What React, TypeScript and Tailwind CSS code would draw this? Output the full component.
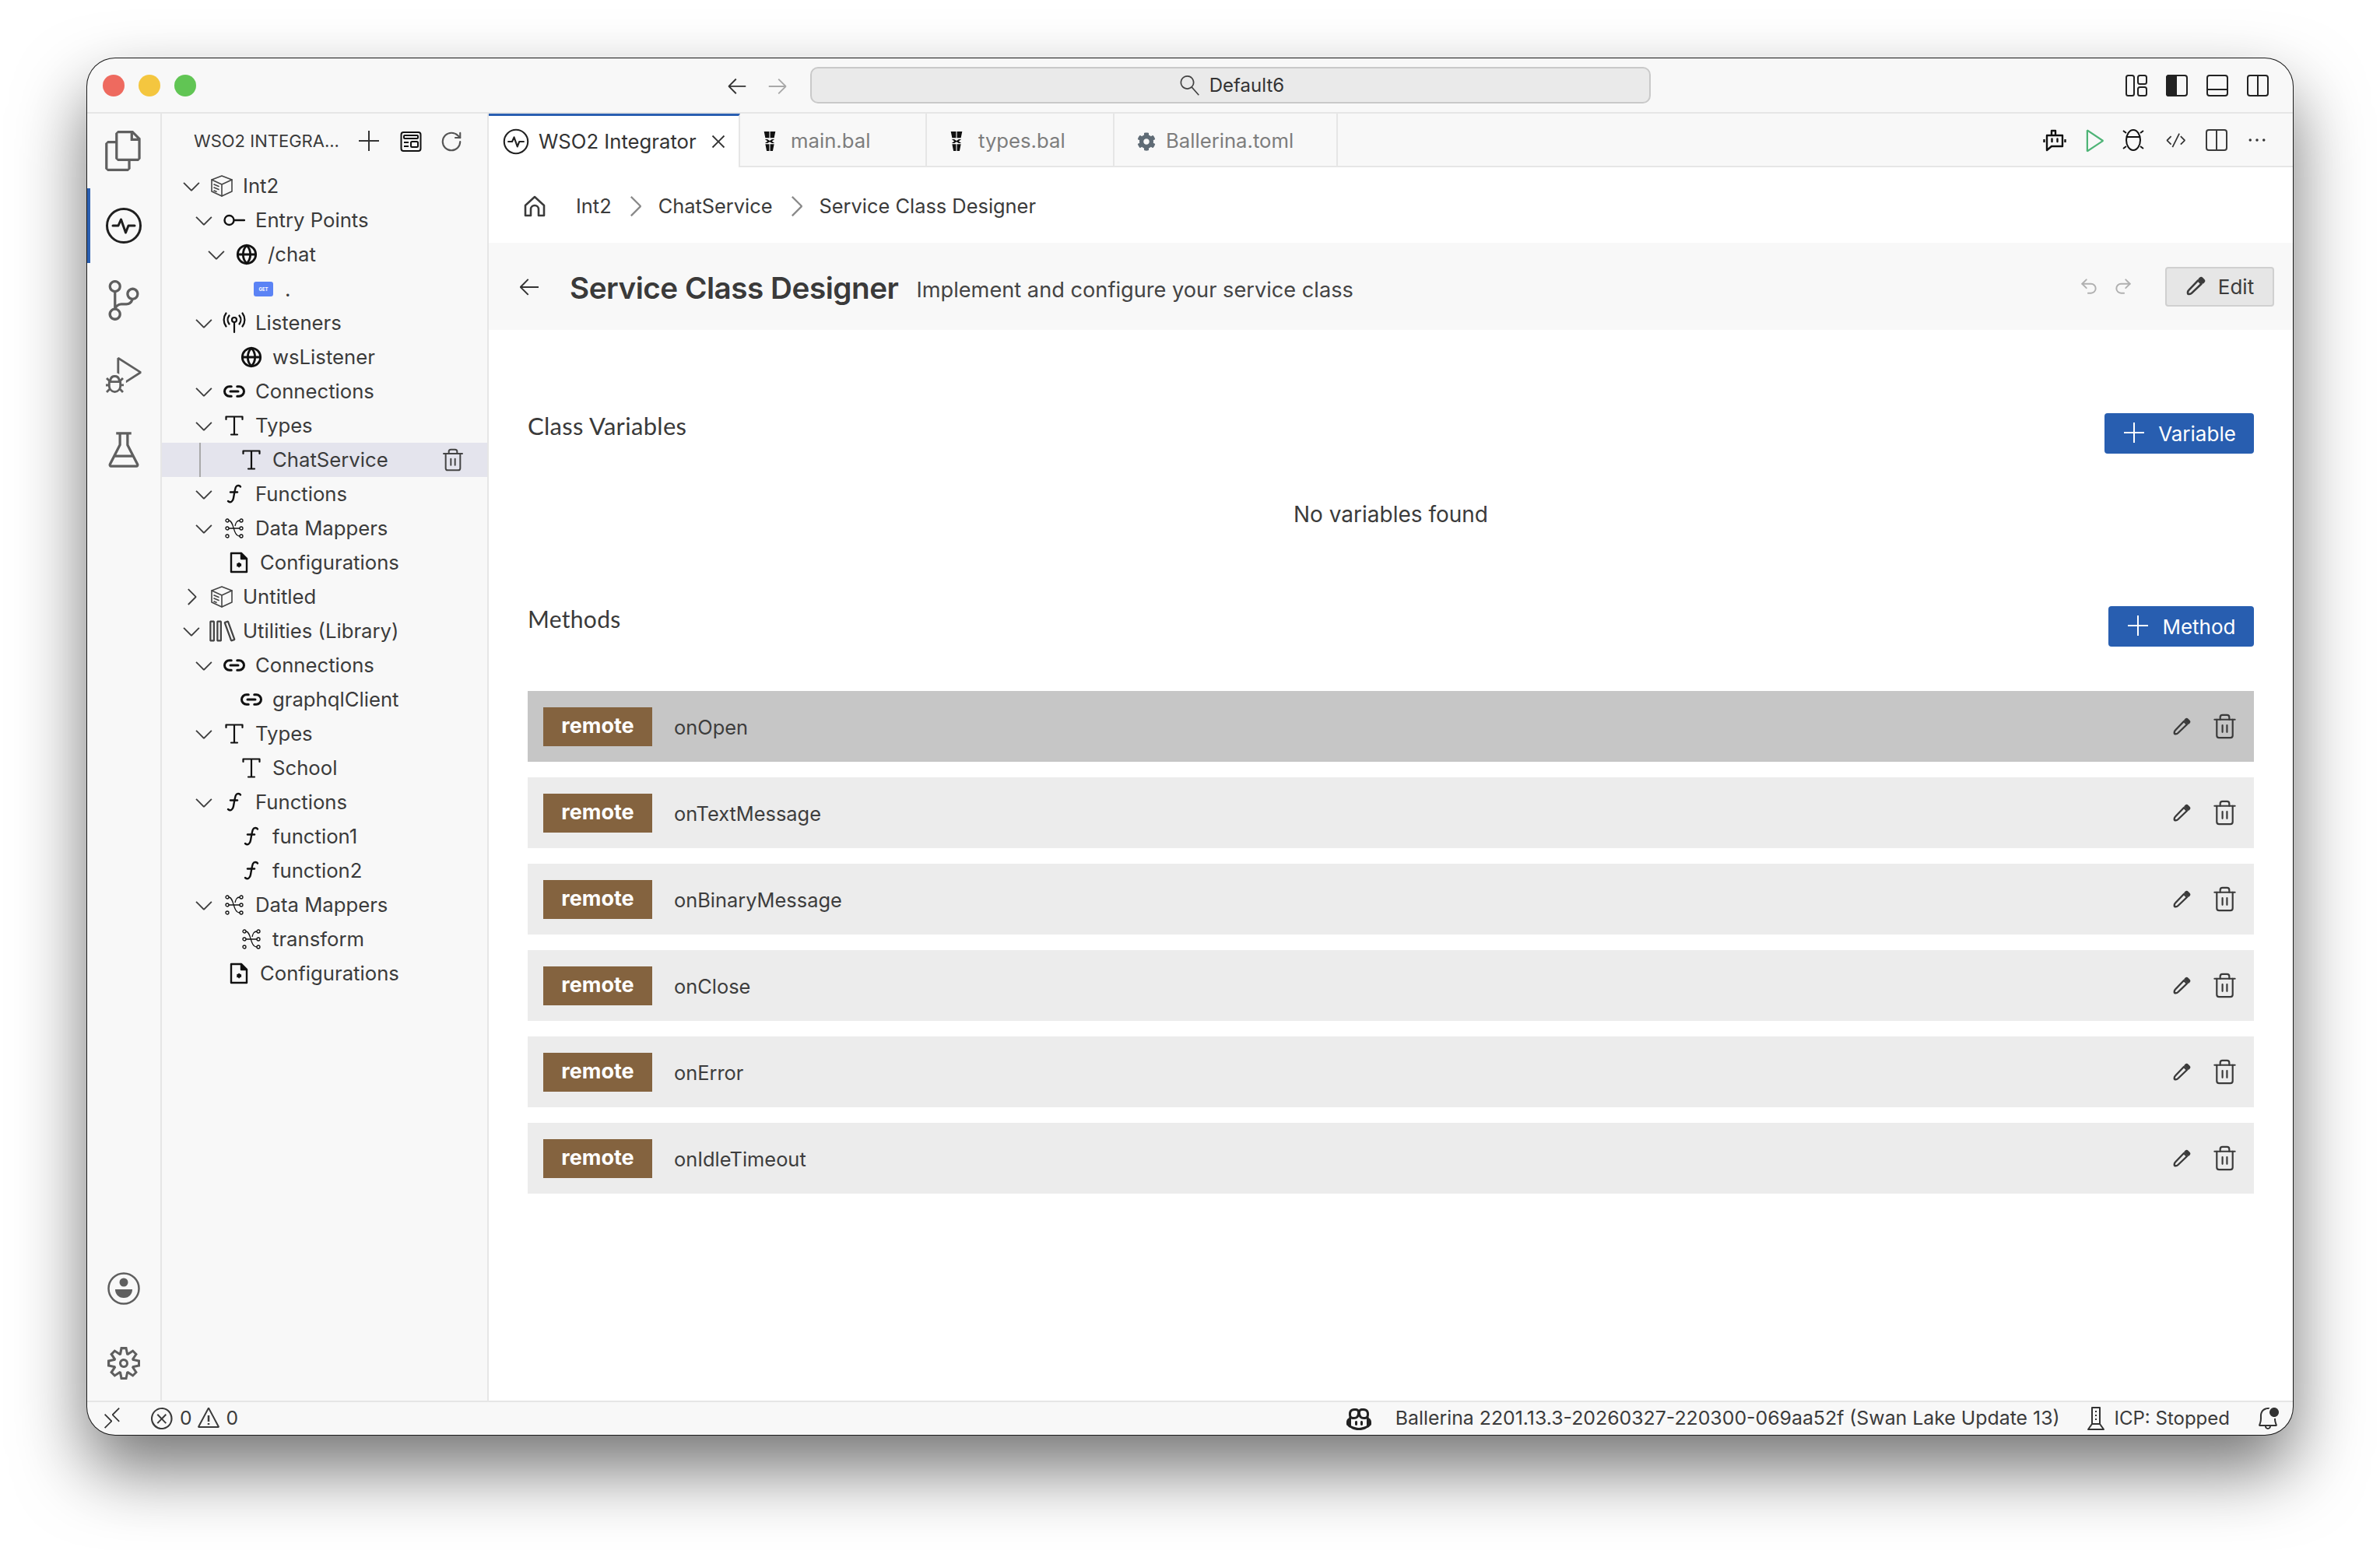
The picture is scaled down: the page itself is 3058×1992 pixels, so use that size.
import React from 'react';
import { Globe, Link2, Redo2, RotateCw, Trash2, Undo2 } from 'lucide-react';
import { FaCog } from 'react-icons/fa';
import {
  VscAdd, VscArrowLeft, VscArrowRight, VscBeaker, VscBellDot, VscChevronDown, VscChevronRight,
  VscClose, VscCode, VscCopilot, VscDebugAlt, VscEllipsis, VscError, VscFiles,
  VscLibrary, VscPlay, VscRemote, VscSearch, VscSettingsGear, VscSourceControl,
  VscWarning,
} from 'react-icons/vsc';

const Pulse = ({ size = 48 }: { size?: number }) => (
  <svg width={size} height={size} viewBox="0 0 48 48" fill="none" stroke="currentColor" strokeWidth="3" strokeLinecap="round" strokeLinejoin="round">
    <circle cx="24" cy="24" r="21.5" />
    <path d="M10 24h7l3.5-8 6 17 3.5-9h8" />
  </svg>
);

const PackageIcon = () => (
  <svg width="30" height="30" viewBox="0 0 30 30" fill="none" stroke="#444" strokeWidth="1.6" strokeLinejoin="round" strokeLinecap="round">
    <path d="M15 2l13 5v15l-13 6-13-6V7z" />
    <path d="M2 7l13 6 13-6M15 13v15" />
    <path d="M5 13l6 2.500M5 17l6 2.500M5 21l3 1.300" />
  </svg>
);

const EntryIcon = () => (
  <svg width="28" height="18" viewBox="0 0 28 18" fill="none" stroke="#111" strokeWidth="2.4" strokeLinecap="round">
    <circle cx="7.5" cy="9" r="6" />
    <path d="M14 9h13" />
  </svg>
);

const ListenIcon = () => (
  <svg width="30" height="28" viewBox="0 0 30 28" fill="none" stroke="#111" strokeWidth="2.2" strokeLinecap="round">
    <circle cx="15" cy="10" r="3" />
    <path d="M15 13v13" />
    <path d="M8.500 4.500a9 9 0 0 0 0 11M21.500 4.500a9 9 0 0 1 0 11M4.500 1.500a14 14 0 0 0 0 17M25.500 1.500a14 14 0 0 1 0 17" />
  </svg>
);

const TypeIcon = () => (
  <svg width="24" height="26" viewBox="0 0 24 26" fill="none" stroke="#111" strokeWidth="2.2" strokeLinecap="round" strokeLinejoin="round">
    <path d="M1.500 5V1.500h21V5M12 1.500v23M8 24.500h8" />
  </svg>
);

const FnIcon = () => (
  <svg width="20" height="26" viewBox="0 0 20 26" fill="none" stroke="#111" strokeWidth="2.4" strokeLinecap="round">
    <path d="M18 3.500c-1-1.500-4.500-2.500-6 .5-1 2-2 8-3 14-.6 4-3.500 7-7 4" />
    <path d="M5 10.500h9" />
  </svg>
);

const MapperIcon = () => (
  <svg width="24" height="26" viewBox="0 0 24 26" fill="none" stroke="#111" strokeWidth="1.3">
    <circle cx="3" cy="3" r="2" />
    <circle cx="21" cy="3" r="2" />
    <circle cx="3" cy="13" r="2" />
    <circle cx="21" cy="13" r="2" />
    <circle cx="3" cy="23" r="2" />
    <circle cx="21" cy="23" r="2" />
    <path d="M5 3c7 0 5 20 14 20M5 13h14M19 3c-4 0-5 3-6 7" />
  </svg>
);

const ConfigIcon = () => (
  <svg width="24" height="28" viewBox="0 0 24 28" fill="none" stroke="#111" strokeWidth="2.4" strokeLinejoin="round">
    <path d="M2 2h13l7 7v17H2z" />
    <path d="M15 2v7h7z" fill="#111" />
    <circle cx="12" cy="17" r="2.400" fill="#111" stroke="#111" strokeWidth="1.600" strokeDasharray="1.600 0.800" />
  </svg>
);

const LayoutIcon = ({ className = '' }: { className?: string }) => (
  <svg width="28" height="28" viewBox="0 0 28 28" fill="none" stroke="#111" strokeWidth="2" className={className}>
    <rect x="1.500" y="2" width="25" height="24" rx="3" />
    <rect x="5" y="6" width="18" height="4" rx="1" />
    <path d="M5 15h6M5 20h6" />
    <rect x="14" y="14" width="9" height="7" rx="1.500" />
  </svg>
);

const Ballerina = () => (
  <svg width="18" height="25" viewBox="0 0 16 24" preserveAspectRatio="none" fill="#111">
    <path d="M1.500 0h6v8H3zM8.500 0h6L13 8H8.500zM2.500 9.500h3l2.500 2 2.500-2h3l-3 2.500 3 2.500h-3L8 12.800 5.500 14.500h-3l3-2.500zM3 15.500h4.500V24H4.500zM8.500 15.500H13L11.500 24h-3z" />
  </svg>
);

const PanelsIcon = () => (
  <svg width="28" height="28" viewBox="0 0 28 28" fill="none" stroke="#222" strokeWidth="2">
    <rect x="1" y="1" width="10" height="26" rx="2.500" />
    <rect x="16" y="1" width="11" height="11" rx="2.500" />
    <rect x="16" y="16" width="11" height="11" rx="2.500" />
  </svg>
);

const SidebarFilled = () => (
  <svg width="28" height="28" viewBox="0 0 28 28" fill="none" stroke="#222" strokeWidth="2">
    <path d="M3.500 1H13v26H3.500A2.500 2.500 0 0 1 1 24.500v-21A2.500 2.500 0 0 1 3.500 1z" fill="#222" />
    <rect x="1" y="1" width="26" height="26" rx="3" />
  </svg>
);

const BottomPanel = () => (
  <svg width="28" height="28" viewBox="0 0 28 28" fill="none" stroke="#222" strokeWidth="2">
    <rect x="1" y="1" width="26" height="26" rx="3" />
    <path d="M1 19h26" />
  </svg>
);

const SplitIcon = ({ color = '#222' }: { color?: string }) => (
  <svg width="28" height="28" viewBox="0 0 28 28" fill="none" stroke={color} strokeWidth="2">
    <rect x="1" y="1" width="26" height="26" rx="3" />
    <path d="M14 1v26" />
  </svg>
);

const RobotIcon = () => (
  <svg width="30" height="30" viewBox="0 0 30 30" fill="none" stroke="#111" strokeWidth="2.400" strokeLinejoin="round">
    <path d="M5 9h20v14H11l-6 5z" />
    <path d="M11 9V3h5v6M1.500 14v4M28.500 14v4" />
    <path d="M11.500 13.500v3.500M18.500 13.500v3.500" strokeLinecap="round" />
  </svg>
);

const BugIcon = () => (
  <svg width="28" height="30" viewBox="0 0 28 30" fill="none" stroke="#111" strokeWidth="2">
    <ellipse cx="14" cy="15" rx="9" ry="13" />
    <path d="M5.500 11h17M1 3l4 3M27 3l-4 3M1 26l4-3M27 26l-4-3" />
  </svg>
);

const ServerIcon = () => (
  <svg width="24" height="30" viewBox="0 0 24 30" fill="none" stroke="#333" strokeWidth="2" strokeLinejoin="round">
    <path d="M7 1h10v21H7zM7 22l-5 7h20l-5-7" />
    <path d="M11 6h2M11 11h2M11 16h2" />
  </svg>
);

const Pencil = ({ size }: { size: number }) => (
  <svg width={size} height={size} viewBox="0 0 24 24" fill="none" stroke="#3b3b3b" strokeWidth="2.400" strokeLinejoin="round">
    <path d="M3 21c-.6-2 0-3.500 1-4.500L15 5l4 4L7.500 20c-1 1-2.500 1.600-4.500 1z" />
    <path d="M16.500 3.500l1-1c.8-.7 1.500-.7 2.200 0l2 2c.7.700.7 1.400 0 2.100l-1 1z" fill="#3b3b3b" />
  </svg>
);

const HomeIcon = () => (
  <svg width="28" height="28" viewBox="0 0 28 28" fill="none" stroke="#3b3b3b" strokeWidth="2.600" strokeLinejoin="round">
    <path d="M2 13L14 2l12 11v13h-7v-8a5 5 0 0 0-10 0v8H2z" />
  </svg>
);

const AccountIcon = () => (
  <svg width="42" height="42" viewBox="0 0 42 42" fill="#5f5f5f">
    <circle cx="21" cy="21" r="19.500" fill="none" stroke="#5f5f5f" strokeWidth="2.500" />
    <circle cx="21" cy="13" r="5.500" />
    <path d="M10 22h22c0 6-4 11-11 11s-11-5-11-11z" />
  </svg>
);

type RowProps = {
  pad: string;
  open?: 'down' | 'right';
  icon: React.ReactNode;
  label: string;
};

const TreeRow = ({ pad, open, icon, label }: RowProps) => (
  <div className={`flex h-[44px] items-center ${pad}`}>
    {open === 'down' && <VscChevronDown className="-mx-[4px] w-[34px] h-[34px] text-[#3f3f3f] shrink-0" />}
    {open === 'right' && <VscChevronRight className="-mx-[4px] w-[34px] h-[34px] text-[#3f3f3f] shrink-0" />}
    <div className={`flex w-[30px] shrink-0 justify-center ${open ? 'ml-[11px]' : ''}`}>{icon}</div>
    <span className="ml-[12px] text-[25.7px] text-[#3b3b3b]">{label}</span>
  </div>
);

const pkg = <PackageIcon />;
const globe = <Globe size={28} color="#111" strokeWidth={2.4} />;
const link = <Link2 size={30} color="#111" strokeWidth={2.4} />;

const methods = ['onOpen', 'onTextMessage', 'onBinaryMessage', 'onClose', 'onError', 'onIdleTimeout'];

const MethodRow = ({ name, active }: { name: string; active: boolean }) => (
  <div className={`flex h-[91px] items-center pl-[20px] pr-[20px] ${active ? 'bg-[#c6c6c6]' : 'bg-[#ececec]'}`}>
    <span className="flex h-[50px] w-[140px] items-center justify-center bg-[#84633f] text-[27px] font-bold text-white">remote</span>
    <span className="ml-[28px] mt-[3px] text-[25.4px] text-[#3d3d3d]">{name}</span>
    <div className="ml-auto flex items-center gap-[26px]">
      <Pencil size={24} />
      <Trash2 size={35} strokeWidth={1.5} color="#3b3b3b" />
    </div>
  </div>
);

const ActivityItem = ({ children, active }: { children: React.ReactNode; active?: boolean }) => (
  <div className={`flex h-[96px] items-center justify-center ${active ? 'border-l-[4px] border-[#2a5fb2] pr-[4px]' : ''}`}>{children}</div>
);

const Tab = ({ w, icon, label }: { w: string; icon: React.ReactNode; label: string }) => (
  <div className={`flex h-full items-center border-r-2 border-b-2 border-[#e6e6e6] pt-[4px] ${w}`}>
    {icon}
    <span className="text-[25.7px] text-[#7d7d7d]">{label}</span>
  </div>
);

const ActionSlot = ({ children }: { children: React.ReactNode }) => (
  <div className="flex w-[52px] justify-center">{children}</div>
);

export default function App() {
  return (
    <div className="h-[1992px] w-[3058px] overflow-hidden bg-white pl-[112px] pt-[75px] [font-family:Inter,sans-serif]">
      <div className="flex h-[1769px] w-[2834px] flex-col overflow-hidden rounded-[36px] bg-[#f8f8f8] shadow-[0_0_0_1px_#1a1a1a,0_44px_90px_rgba(0,0,0,0.55)]">
        {/* title bar */}
        <div className="flex h-[71px] shrink-0 items-center border-b-2 border-[#e6e6e6]">
          <div className="ml-[20px] flex gap-[18px]">
            <span className="h-[28px] w-[28px] rounded-full bg-[#ee6a5f]" />
            <span className="h-[28px] w-[28px] rounded-full bg-[#f4c63f]" />
            <span className="h-[28px] w-[28px] rounded-full bg-[#61c554]" />
          </div>
          <div className="ml-[680px] flex items-center gap-[22px]">
            <VscArrowLeft className="w-[30px] h-[30px] text-[#333]" />
            <VscArrowRight className="w-[30px] h-[30px] text-[#a8a8a8]" />
          </div>
          <div className="ml-[27px] flex h-[47px] w-[1080px] items-center justify-center gap-[12px] rounded-[10px] border-2 border-[#c9c9c9] bg-[#eaeaea] pl-[4px]">
            <VscSearch className="w-[26px] h-[26px] text-[#444] -scale-x-100" />
            <span className="text-[24px] text-[#333]">Default6</span>
          </div>
          <div className="ml-[610px] flex gap-[24px]">
            <PanelsIcon />
            <SidebarFilled />
            <BottomPanel />
            <SplitIcon />
          </div>
        </div>

        <div className="flex min-h-0 flex-1">
          {/* activity bar */}
          <div className="flex w-[96px] shrink-0 flex-col border-r-2 border-[#e6e6e6]">
            <ActivityItem><VscFiles className="w-[52px] h-[52px] text-[#5f5f5f]" /></ActivityItem>
            <ActivityItem active><div className="text-[#1f1f1f]"><Pulse /></div></ActivityItem>
            <ActivityItem><VscSourceControl className="w-[52px] h-[52px] text-[#5f5f5f]" /></ActivityItem>
            <ActivityItem><VscDebugAlt className="w-[46px] h-[46px] text-[#5f5f5f]" /></ActivityItem>
            <ActivityItem><VscBeaker className="w-[52px] h-[52px] text-[#5f5f5f]" /></ActivityItem>
            <div className="mt-auto" />
            <ActivityItem><AccountIcon /></ActivityItem>
            <ActivityItem><VscSettingsGear className="w-[42px] h-[42px] text-[#5f5f5f]" /></ActivityItem>
          </div>

          {/* explorer */}
          <div className="flex w-[420px] shrink-0 flex-col border-r-2 border-[#e6e6e6]">
            <div className="flex h-[71px] items-center pl-[41px]">
              <span className="w-[182px] text-[22px] text-[#3b3b3b] whitespace-nowrap">WSO2 INTEGRA...</span>
              <VscAdd className="ml-[28px] w-[32px] h-[32px] text-[#333]" />
              <LayoutIcon className="ml-[23px]" />
              <RotateCw size={30} strokeWidth={1.7} color="#555" className="ml-[23px]" />
            </div>
            <div>
              <TreeRow pad="pl-[25px]" open="down" icon={pkg} label="Int2" />
              <TreeRow pad="pl-[41px]" open="down" icon={<EntryIcon />} label="Entry Points" />
              <TreeRow pad="pl-[57px]" open="down" icon={globe} label="/chat" />
              <div className="flex h-[44px] items-center pl-[118px]">
                <span className="flex h-[19px] w-[25px] items-center justify-center rounded-[3px] bg-[#5b83f5] text-[6px] font-bold text-white">GET</span>
                <span className="ml-[15px] text-[26px] text-[#3b3b3b]">.</span>
              </div>
              <TreeRow pad="pl-[41px]" open="down" icon={<ListenIcon />} label="Listeners" />
              <TreeRow pad="pl-[100px]" icon={globe} label="wsListener" />
              <TreeRow pad="pl-[41px]" open="down" icon={link} label="Connections" />
              <TreeRow pad="pl-[41px]" open="down" icon={<TypeIcon />} label="Types" />
              <div className="flex h-[44px] items-center bg-[#e4e4ed] pl-[48px]">
                <span className="h-full w-[2px] bg-[#a9a9a9]" />
                <div className="ml-[50px] flex w-[30px] justify-center"><TypeIcon /></div>
                <span className="ml-[12px] text-[25.7px] text-[#3b3b3b]">ChatService</span>
                <Trash2 size={32} strokeWidth={1.5} color="#444" className="ml-auto mr-[28px]" />
              </div>
              <TreeRow pad="pl-[41px]" open="down" icon={<FnIcon />} label="Functions" />
              <TreeRow pad="pl-[41px]" open="down" icon={<MapperIcon />} label="Data Mappers" />
              <TreeRow pad="pl-[84px]" icon={<ConfigIcon />} label="Configurations" />
              <TreeRow pad="pl-[25px]" open="right" icon={pkg} label="Untitled" />
              <TreeRow pad="pl-[25px]" open="down" icon={<VscLibrary className="w-[36px] h-[36px] shrink-0 text-[#444]" />} label="Utilities (Library)" />
              <TreeRow pad="pl-[41px]" open="down" icon={link} label="Connections" />
              <TreeRow pad="pl-[100px]" icon={link} label="graphqlClient" />
              <TreeRow pad="pl-[41px]" open="down" icon={<TypeIcon />} label="Types" />
              <TreeRow pad="pl-[100px]" icon={<TypeIcon />} label="School" />
              <TreeRow pad="pl-[41px]" open="down" icon={<FnIcon />} label="Functions" />
              <TreeRow pad="pl-[100px]" icon={<FnIcon />} label="function1" />
              <TreeRow pad="pl-[100px]" icon={<FnIcon />} label="function2" />
              <TreeRow pad="pl-[41px]" open="down" icon={<MapperIcon />} label="Data Mappers" />
              <TreeRow pad="pl-[100px]" icon={<MapperIcon />} label="transform" />
              <TreeRow pad="pl-[84px]" icon={<ConfigIcon />} label="Configurations" />
            </div>
          </div>

          {/* editor */}
          <div className="flex min-w-0 flex-1 flex-col bg-white">
            <div className="flex h-[69px] shrink-0 bg-[#f8f8f8]">
              <div className="flex w-[323px] items-center border-t-[3px] border-r-2 border-t-[#2a5fb2] border-r-[#e6e6e6] bg-white pl-[18px]">
                <div className="text-[#222]"><Pulse size={34} /></div>
                <span className="ml-[12px] text-[25.7px] text-[#333]">WSO2 Integrator</span>
                <VscClose className="ml-[13px] w-[30px] h-[30px] text-[#333]" />
              </div>
              <Tab w="w-[240px] pl-[29px] gap-[18px]" icon={<Ballerina />} label="main.bal" />
              <Tab w="w-[241px] pl-[29px] gap-[19px]" icon={<Ballerina />} label="types.bal" />
              <Tab w="w-[287px] pl-[29px] gap-[13px]" icon={<FaCog className="w-[24px] h-[24px] text-[#5f6b75]" />} label="Ballerina.toml" />
              <div className="flex flex-1 items-center border-b-2 border-[#e6e6e6]">
                <div className="ml-auto mr-[20px] flex items-center">
                  <ActionSlot><RobotIcon /></ActionSlot>
                  <ActionSlot><VscPlay className="w-[36px] h-[36px] text-[#4fb477]" /></ActionSlot>
                  <ActionSlot><div className="mr-[6px]"><BugIcon /></div></ActionSlot>
                  <ActionSlot><VscCode className="w-[28px] h-[28px] text-[#333]" /></ActionSlot>
                  <ActionSlot><SplitIcon color="#3b3b3b" /></ActionSlot>
                  <ActionSlot><VscEllipsis className="w-[28px] h-[28px] text-[#333]" /></ActionSlot>
                </div>
              </div>
            </div>

            <div className="flex h-[97px] shrink-0 items-center pl-[45px] pt-[3px]">
              <HomeIcon />
              <span className="ml-[39px] text-[25.4px] text-[#3b3b3b]">Int2</span>
              <VscChevronRight className="mx-[9px] w-[42px] h-[42px] text-[#8a8a8a]" />
              <span className="text-[25.4px] text-[#3b3b3b]">ChatService</span>
              <VscChevronRight className="mx-[9px] w-[42px] h-[42px] text-[#8a8a8a]" />
              <span className="text-[25.4px] text-[#3b3b3b]">Service Class Designer</span>
            </div>

            <div className="flex h-[112px] shrink-0 items-center bg-[#f8f8f8] pl-[36px] pr-[24px]">
              <VscArrowLeft className="w-[32px] h-[32px] text-[#333]" />
              <h1 className="ml-[36px] mt-[5px] text-[38.7px] font-semibold tracking-[-0.5px] text-[#3a3a3a]">Service Class Designer</h1>
              <span className="ml-[23px] mt-[11px] text-[27.2px] text-[#444]">Implement and configure your service class</span>
              <div className="ml-auto flex items-center gap-[18px]">
                <Undo2 size={26} strokeWidth={1.8} color="#b0b0b0" />
                <Redo2 size={26} strokeWidth={1.8} color="#b0b0b0" />
                <div className="ml-[23px] flex h-[51px] w-[140px] items-center justify-center gap-[16px] rounded-[4px] border-2 border-[#d0d0d0] bg-[#e6e6e6]">
                  <Pencil size={26} />
                  <span className="text-[26px] text-[#3b3b3b]">Edit</span>
                </div>
              </div>
            </div>

            <div className="flex flex-col px-[50px] pt-[107px]">
              <div className="flex h-[52px] items-center justify-between">
                <span className="-mt-[20px] [font-family:Lato,sans-serif] text-[31px] tracking-[0.3px] text-[#3a3a3a]">Class Variables</span>
                <button className="flex h-[52px] w-[192px] items-center justify-center gap-[14px] rounded-[4px] bg-[#285eb0] text-[26px] text-white">
                  <VscAdd className="w-[32px] h-[32px]" />
                  Variable
                </button>
              </div>
              <div className="mt-[53px] flex h-[50px] items-center justify-center text-[28px] text-[#3b3b3b]">No variables found</div>
              <div className="mt-[93px] flex h-[52px] items-center justify-between">
                <span className="-mt-[20px] [font-family:Lato,sans-serif] text-[30px] tracking-[0.3px] text-[#3a3a3a]">Methods</span>
                <button className="flex h-[52px] w-[187px] items-center justify-center gap-[14px] rounded-[4px] bg-[#285eb0] text-[26px] text-white">
                  <VscAdd className="w-[32px] h-[32px]" />
                  Method
                </button>
              </div>
              <div className="mt-[57px] flex flex-col gap-[20px]">
                {methods.map((m, i) => (
                  <MethodRow key={m} name={m} active={i === 0} />
                ))}
              </div>
            </div>
          </div>
        </div>

        {/* status bar */}
        <div className="flex h-[44px] shrink-0 items-center border-t-2 border-[#e6e6e6] text-[24.7px] text-[#3b3b3b]">
          <VscRemote className="ml-[16px] w-[32px] h-[32px] text-[#333]" />
          <VscError className="ml-[32px] w-[32px] h-[32px]" />
          <span className="ml-[7px]">0</span>
          <VscWarning className="ml-[5px] w-[32px] h-[32px]" />
          <span className="ml-[7px]">0</span>
          <div className="ml-auto flex items-center">
            <VscCopilot className="w-[32px] h-[32px] text-[#222]" />
            <span className="ml-[31px] text-[24.85px]">Ballerina 2201.13.3-20260327-220300-069aa52f (Swan Lake Update 13)</span>
            <div className="ml-[34px]"><ServerIcon /></div>
            <span className="ml-[12px] text-[24px]">ICP: Stopped</span>
            <VscBellDot className="ml-[33px] mr-[16px] w-[32px] h-[32px] text-[#333]" />
          </div>
        </div>
      </div>
    </div>
  );
}
